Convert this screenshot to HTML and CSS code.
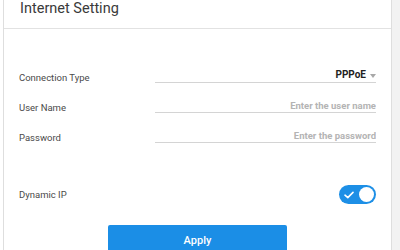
FILE: index.html
```html
<!DOCTYPE html>
<html lang="en">
<head>
  <meta charset="UTF-8">
  <meta name="viewport" content="width=device-width, initial-scale=1.0">
  <title>Internet Setting</title>
  <link rel="stylesheet" href="styles.css">
</head>
<body>
  <div class="card">
    <div class="card-header">Internet Setting</div>

    <form class="card-body">
      <div class="form-row">
        <label class="form-label">Connection Type</label>
        <div class="form-select">
          <span>PPPoE</span>
          <span class="caret"></span>
        </div>
      </div>

      <div class="form-row">
        <label class="form-label" for="username">User Name</label>
        <input class="form-input" id="username" type="text" placeholder="Enter the user name">
      </div>

      <div class="form-row">
        <label class="form-label" for="password">Password</label>
        <input class="form-input" id="password" type="password" placeholder="Enter the password">
      </div>

      <div class="switch-row">
        <span class="form-label">Dynamic IP</span>
        <span class="switch">
          <svg class="switch-check" width="10" height="8" viewBox="0 0 10 8">
            <path d="M1 4.2 L3.8 6.6 L9 1.4" fill="none" stroke="#fff" stroke-width="1.6" stroke-linecap="round" stroke-linejoin="round"/>
          </svg>
          <span class="switch-knob"></span>
        </span>
      </div>

      <button type="button" class="apply-btn">Apply</button>
    </form>
  </div>
</body>
</html>
```

FILE: styles.css
```css
html {
  background-color: #f2f2f2;
}

body {
  margin: 0 8px 0 0;
  height: 250px;
  overflow: hidden;
  background-color: white;
  font-family: Roboto, "Liberation Sans", sans-serif;
}

.card {
  margin-left: 3px;
  border-left: 1px solid #dedede;
  border-right: 1px solid #dedede;
  background-color: white;
  height: 100%;
}

.card-header {
  padding: 0 16px 10px;
  font-size: 14.5px;
  line-height: 18px;
  color: #3a3a3a;
  border-bottom: 1px solid #e2e2e2;
}

.card-body {
  padding: 25px 15px 0;
}

.form-row {
  display: flex;
  align-items: flex-end;
  height: 30px;
}

.form-label {
  width: 136px;
  font-size: 9.5px;
  line-height: 12px;
  color: #4a4a4a;
}

.form-select,
.form-input {
  flex: 1;
  height: 14px;
  margin-bottom: 1px;
  border: none;
  border-bottom: 1px solid #d4d4d4;
}

.form-select {
  display: flex;
  justify-content: flex-end;
  align-items: center;
  font-size: 10px;
  font-weight: 700;
  line-height: 12px;
  color: #222;
}

.caret {
  width: 0;
  height: 0;
  margin: 1px 0 0 4px;
  border-left: 3px solid transparent;
  border-right: 3px solid transparent;
  border-top: 4px solid #a8a8a8;
}

.form-input {
  padding: 0;
  font-family: inherit;
  font-size: 9.5px;
  font-weight: 700;
  text-align: right;
  color: #333;
  outline: none;
  background: transparent;
}

.form-input::placeholder {
  color: #b4b4b4;
}

.switch-row {
  display: flex;
  align-items: center;
  justify-content: space-between;
  margin-top: 41px;
}

.switch {
  display: flex;
  align-items: center;
  justify-content: space-between;
  width: 37px;
  height: 19px;
  padding: 0 2px 0 5px;
  box-sizing: border-box;
  border-radius: 10px;
  background-color: #1d8fe6;
}

.switch-knob {
  width: 15px;
  height: 15px;
  border-radius: 50%;
  background-color: white;
}

.apply-btn {
  display: block;
  width: 179px;
  height: 30px;
  margin: 21px auto 0;
  border: none;
  border-radius: 2px;
  background-color: #1b8ee6;
  color: white;
  font-family: inherit;
  font-size: 11px;
  font-weight: 500;
  cursor: pointer;
}
```
